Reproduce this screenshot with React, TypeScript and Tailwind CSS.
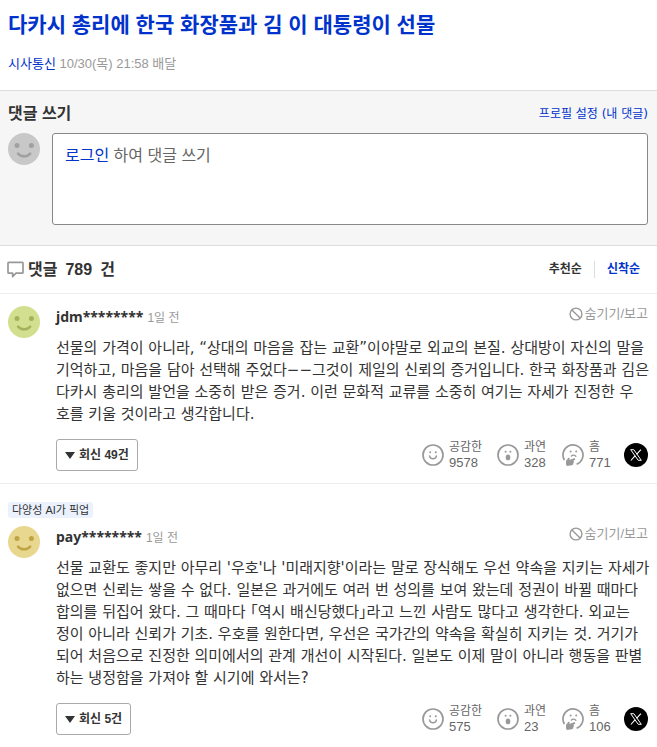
import React from "react";

type Comment = {
  id: string;
  user: string;
  time: string;
  tag?: string;
  lines: string[];
  replies: number;
  counts: [number, number, number];
  face: string;
  feature: string;
};

const comments: Comment[] = [
  {
    id: "c1",
    user: "jdm********",
    time: "1일 전",
    lines: [
      "선물의 가격이 아니라, “상대의 마음을 잡는 교환”이야말로 외교의 본질. 상대방이 자신의 말을",
      "기억하고, 마음을 담아 선택해 주었다−−그것이 제일의 신뢰의 증거입니다. 한국 화장품과 김은",
      "다카시 총리의 발언을 소중히 받은 증거. 이런 문화적 교류를 소중히 여기는 자세가 진정한 우",
      "호를 키울 것이라고 생각합니다.",
    ],
    replies: 49,
    counts: [9578, 328, 771],
    face: "#d2df8f",
    feature: "#a5b25b",
  },
  {
    id: "c2",
    user: "pay********",
    time: "1일 전",
    tag: "다양성 AI가 픽업",
    lines: [
      "선물 교환도 좋지만 아무리 '우호'나 '미래지향'이라는 말로 장식해도 우선 약속을 지키는 자세가",
      "없으면 신뢰는 쌓을 수 없다. 일본은 과거에도 여러 번 성의를 보여 왔는데 정권이 바뀔 때마다",
      "합의를 뒤집어 왔다. 그 때마다 「역시 배신당했다」라고 느낀 사람도 많다고 생각한다. 외교는",
      "정이 아니라 신뢰가 기초. 우호를 원한다면, 우선은 국가간의 약속을 확실히 지키는 것. 거기가",
      "되어 처음으로 진정한 의미에서의 관계 개선이 시작된다. 일본도 이제 말이 아니라 행동을 판별",
      "하는 냉정함을 가져야 할 시기에 와서는?",
    ],
    replies: 5,
    counts: [575, 23, 106],
    face: "#e8d78e",
    feature: "#bfa446",
  },
];

function Avatar({ face, feature }: { face: string; feature: string }) {
  return (
    <svg viewBox="0 0 32 32" className="size-8 shrink-0" aria-hidden="true">
      <circle cx="16" cy="16" r="16" fill={face} />
      <circle cx="9" cy="12.4" r="2.5" fill={feature} />
      <circle cx="23.4" cy="12.4" r="2.5" fill={feature} />
      <path d="M10 20.6c3.2 3.6 9 3.6 12.2 0" fill="none" stroke={feature} strokeWidth="2.4" strokeLinecap="round" />
    </svg>
  );
}

function SmileIcon() {
  return (
    <svg viewBox="0 0 22 22" className="size-[22px] shrink-0" aria-hidden="true">
      <circle cx="11" cy="11" r="10" fill="none" stroke="#999" strokeWidth="1.7" />
      <circle cx="8.2" cy="8.2" r="1" fill="#999" />
      <circle cx="13.8" cy="8.2" r="1" fill="#999" />
      <path d="M7.6 12c.5 3.600 6.300 3.600 6.800 0" fill="none" stroke="#999" strokeWidth="1.5" strokeLinecap="round" />
    </svg>
  );
}

function SurpriseIcon() {
  return (
    <svg viewBox="0 0 22 22" className="size-[22px] shrink-0" aria-hidden="true">
      <circle cx="11" cy="11" r="10" fill="none" stroke="#999" strokeWidth="1.7" />
      <circle cx="8.6" cy="7.8" r="1" fill="#999" />
      <circle cx="13.4" cy="7.8" r="1" fill="#999" />
      <ellipse cx="11" cy="13.4" rx="2.3" ry="2.9" fill="#999" />
    </svg>
  );
}

function ThinkIcon() {
  return (
    <svg viewBox="0 0 22 22" className="size-[22px] shrink-0" aria-hidden="true">
      <path d="M2.400 16.100A10 10 0 1 1 14.600 20.300" fill="none" stroke="#999" strokeWidth="1.7" />
      <circle cx="8.6" cy="7.600" r="1" fill="#999" />
      <circle cx="14.2" cy="7.600" r="1" fill="#999" />
      <path d="M9.400 12c1.400-1.200 3-1.100 4.400.3" fill="none" stroke="#999" strokeWidth="1.4" strokeLinecap="round" />
      <path d="M4 17l2-2.800c.8-.9 2-.2 1.600.9l-.3.8 4.700-1.600c1.300-.4 1.800 1.200.7 1.700l-1.400.7c.9.6.8 1.600.1 2.100.2 1.300-.5 2.200-1.700 2.400L5 22l-1-1.500z" fill="#999" />
    </svg>
  );
}

function ShareX() {
  return (
    <a href="#share" aria-label="X" className="ml-4 block size-6 shrink-0">
      <svg viewBox="0 0 24 24" className="size-6" aria-hidden="true">
        <circle cx="12" cy="12" r="12" fill="#000" />
        <path d="M6.700 6.700h3.100l7.500 10.600h-3.100z" fill="none" stroke="#fff" strokeWidth="1" />
        <path d="M16.900 6.600l-4.300 4.800M11.200 12.700l-4.300 4.800" stroke="#fff" strokeWidth="1.100" />
      </svg>
    </a>
  );
}

function Reaction({ icon, label, count, width }: { icon: React.ReactNode; label: string; count: number; width: string }) {
  return (
    <button type="button" className={"flex items-center gap-[5px] text-left text-[#666] " + width}>
      {icon}
      <span className="flex flex-col whitespace-nowrap text-[13px] leading-4">
        <span className="text-xs leading-4">{label}</span>
        <span>{count}</span>
      </span>
    </button>
  );
}

function CommentItem({ c }: { c: Comment }) {
  return (
    <li className="border-b border-[#eee] py-3 pr-[9px] pl-2 last:border-b-0">
      {c.tag && (
        <div className="mt-1.5 mb-2 flex">
          <span className="rounded-[3px] bg-[#ebf2fd] px-1 text-[11px] leading-4 text-[#333]">{c.tag}</span>
        </div>
      )}
      <article className="flex gap-4">
        <Avatar face={c.face} feature={c.feature} />
        <div className="min-w-0 flex-1">
          <div className="flex items-start justify-between">
            <h3 className="flex items-baseline gap-1 leading-[22px]">
              <a href="#user" className="font-['Noto_Sans','Noto_Sans_CJK_KR',sans-serif] text-sm leading-[22px] font-bold text-[#333]">
                {c.user}
              </a>
              <span className="text-xs font-normal text-[#999]">{c.time}</span>
            </h3>
            <button type="button" className="flex items-center gap-0.5 text-[13px] leading-4 text-[#999]">
              <svg viewBox="0 0 14 14" className="size-3.5" fill="none" stroke="#999" strokeWidth="1.4" aria-hidden="true">
                <circle cx="7" cy="7" r="5.900" />
                <path d="M2.900 2.900l8.200 8.200" />
              </svg>
              숨기기/보고
            </button>
          </div>
          <p className="mt-[9px] font-['DejaVu_Sans','Noto_Sans_CJK_KR',sans-serif] text-[15px] leading-[22px] whitespace-nowrap text-[#333] [font-feature-settings:'halt']">
            {c.lines.map((line, i) => (
              <React.Fragment key={i}>
                {i > 0 && <br />}
                {line}
              </React.Fragment>
            ))}
          </p>
          <div className="mt-3.5 flex items-center justify-between">
            <button type="button" className="flex h-8 items-center gap-1 rounded-[3px] border border-[#aaa] px-2 text-xs font-bold text-[#333]">
              <svg viewBox="0 0 10 7" className="h-[7px] w-2.5" fill="#333" aria-hidden="true">
                <path d="M0 0h10L5 7z" />
              </svg>
              회신 {c.replies}건
            </button>
            <div className="flex items-center">
              <Reaction icon={<SmileIcon />} label="공감한" count={c.counts[0]} width="w-[75px]" />
              <Reaction icon={<SurpriseIcon />} label="과연" count={c.counts[1]} width="w-[65px]" />
              <Reaction icon={<ThinkIcon />} label="흠" count={c.counts[2]} width="w-[46px]" />
              <ShareX />
            </div>
          </div>
        </div>
      </article>
    </li>
  );
}

export default function App() {
  return (
    <main className="overflow-x-hidden bg-white font-['Liberation_Sans','Noto_Sans_CJK_KR',sans-serif] text-[#333]">
      <header className="px-2 pt-2.5 pb-4">
        <h1 className="text-[21px] leading-[30px] font-bold">
          <a href="#article" className="text-[#0033cc]">다카시 총리에 한국 화장품과 김 이 대통령이 선물</a>
        </h1>
        <p className="mt-3.5 text-[13px] leading-5 text-[#999]">
          <a href="#source" className="text-[#0033cc]">시사통신</a> 10/30(목) 21:58 배달
        </p>
      </header>

      <section className="border-y border-[#ddd] bg-[#f6f6f6] pt-3 pr-[9px] pb-5 pl-2">
        <div className="flex items-center justify-between">
          <h2 className="text-base leading-[22px] font-bold">댓글 쓰기</h2>
          <a href="#profile" className="font-['DejaVu_Sans','Noto_Sans_CJK_KR',sans-serif] text-xs text-[#0033cc]">프로필 설정 (내 댓글)</a>
        </div>
        <div className="mt-2 flex gap-3">
          <Avatar face="#c8c8c8" feature="#a0a0a0" />
          <div className="h-[92px] flex-1 rounded-[3px] border border-[#888] bg-white px-3 py-2.5 text-base leading-6 text-[#666]">
            <a href="#login" className="text-[#0033cc]">로그인</a> 하여 댓글 쓰기
          </div>
        </div>
      </section>

      <section>
        <div className="flex h-12 items-center justify-between border-b border-[#eee] pr-[17px] pl-[7px]">
          <h2 className="flex items-center text-base font-bold">
            <svg viewBox="0 0 17 17" className="mr-1 size-[17px]" fill="none" stroke="#999" strokeWidth="1.700" strokeLinejoin="round" aria-hidden="true">
              <path d="M1.700 1.400h13.600a.7.7 0 0 1 .7.700v9.400a.7.7 0 0 1-.7.700H9L5.600 15.600V12.200H1.700a.7.7 0 0 1-.7-.7V2.100a.7.7 0 0 1 .7-.7z" />
            </svg>
            <span className="flex gap-2">
              <span>댓글</span>
              <span>789</span>
              <span>건</span>
            </span>
          </h2>
          <div className="flex items-center text-xs font-bold">
            <button type="button" className="border-r border-[#ddd] pr-3 leading-[17px]">추천순</button>
            <button type="button" className="pl-3 leading-[17px] text-[#0033cc]">신착순</button>
          </div>
        </div>
        <ul>
          {comments.map((c) => (
            <CommentItem key={c.id} c={c} />
          ))}
        </ul>
      </section>
    </main>
  );
}
